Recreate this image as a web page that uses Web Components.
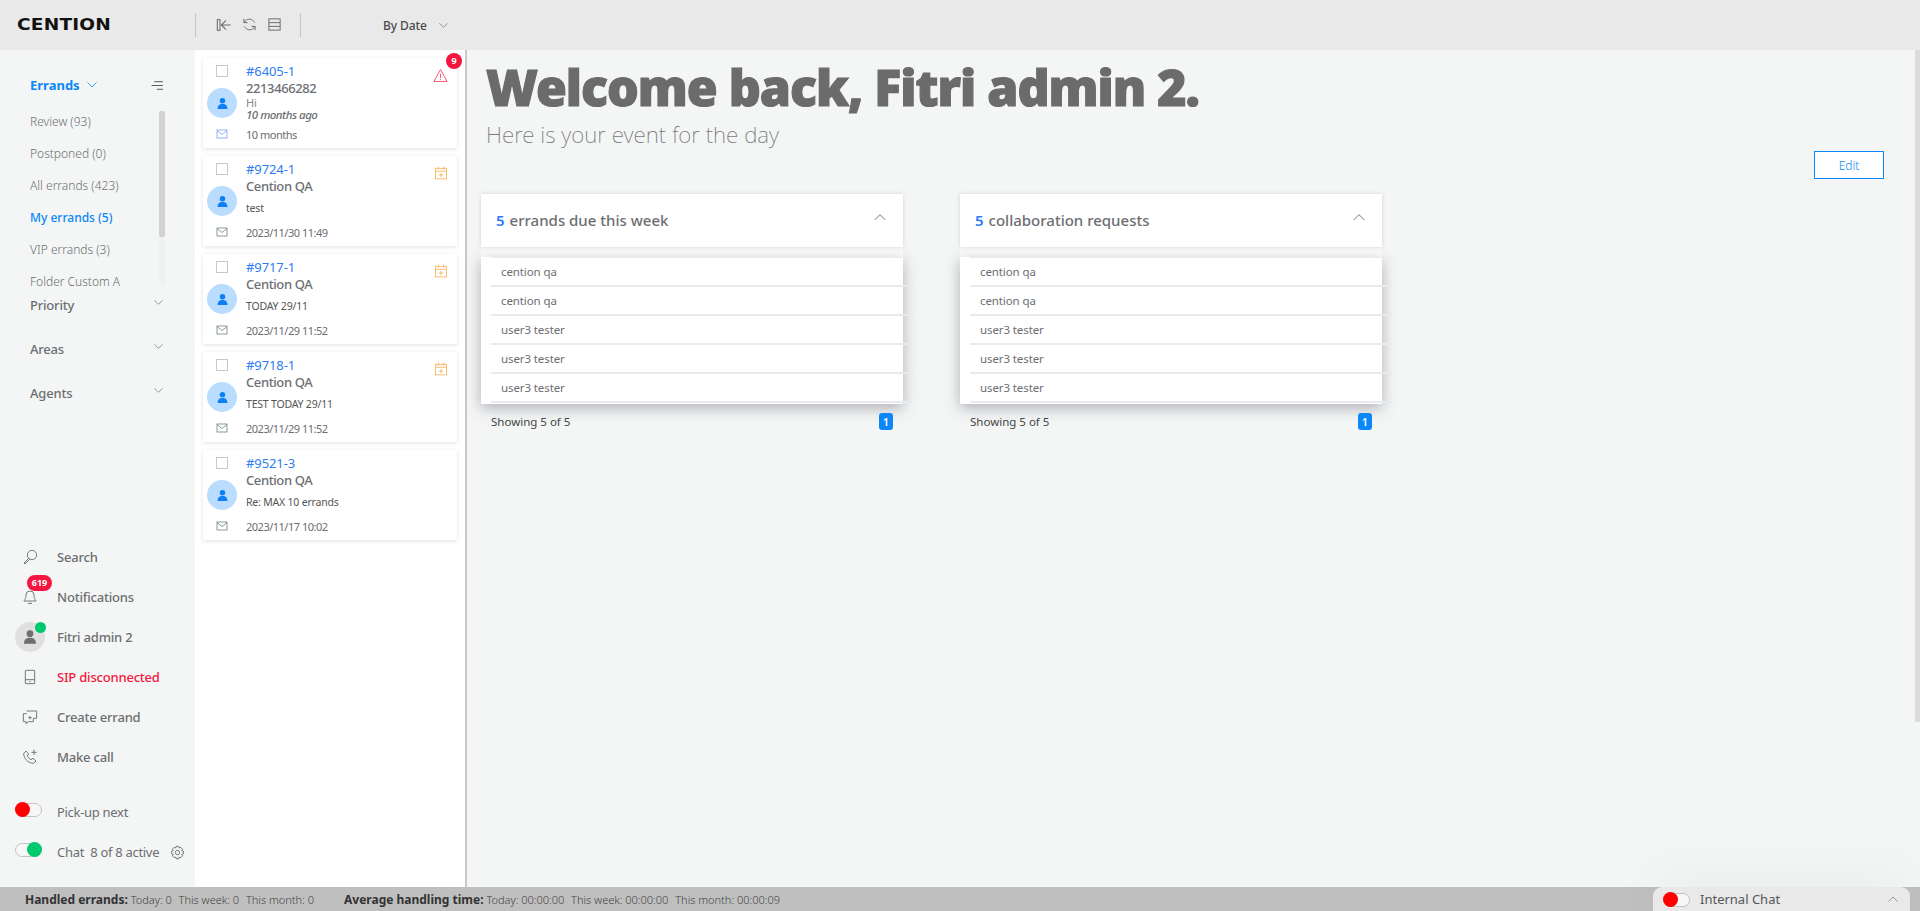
<!DOCTYPE html>
<html>
<head>
<meta charset="utf-8">
<title>Cention</title>
<style>
    html, body { margin: 0; height: 100%; overflow: hidden; }
    body { font-family: "Noto Sans", "Open Sans", sans-serif; color: #6d6e71; }
</style>
</head>
<body>
<app-shell>
    <top-bar slot="top"></top-bar>
    <side-nav slot="side">
        <nav-item icon="search">Search</nav-item>
        <nav-item icon="bell" badge="619">Notifications</nav-item>
        <nav-item icon="avatar">Fitri admin 2</nav-item>
        <nav-item icon="device" tone="alert">SIP disconnected</nav-item>
        <nav-item icon="chatplus">Create errand</nav-item>
        <nav-item icon="callplus">Make call</nav-item>
    </side-nav>
    <errand-list slot="list">
        <errand-card num="#6405-1" who="2213466282" subject="Hi" ago="10 months ago" date="10 months" flag="warn" count="9" kind="light"></errand-card>
        <errand-card num="#9724-1" who="Cention QA" subject="test" date="2023/11/30 11:49"></errand-card>
        <errand-card num="#9717-1" who="Cention QA" subject="TODAY 29/11" date="2023/11/29 11:52"></errand-card>
        <errand-card num="#9718-1" who="Cention QA" subject="TEST TODAY 29/11" date="2023/11/29 11:52"></errand-card>
        <errand-card num="#9521-3" who="Cention QA" subject="Re: MAX 10 errands" date="2023/11/17 10:02" flag="none"></errand-card>
    </errand-list>
    <welcome-board slot="main">
        <dash-widget count="5" label="errands due this week" names="cention qa,cention qa,user3 tester,user3 tester,user3 tester"></dash-widget>
        <dash-widget count="5" label="collaboration requests" names="cention qa,cention qa,user3 tester,user3 tester,user3 tester"></dash-widget>
    </welcome-board>
    <status-bar slot="bottom"></status-bar>
</app-shell>

<script>
// all the line icons live here, name -> svg body (24 box unless noted)
const ICONS = {
    collapse: '<rect x="2" y="4" width="4" height="16"/><path d="M22 12H9M15 5l-7 7 7 7"/>',
    refresh: '<path d="M20 9A9 9 0 0 0 5 6.500L3.500 9M4 15a9 9 0 0 0 15 2.500L20.500 15"/><path d="M3 3v6h6M21 21v-6h-6"/>',
    rows: '<rect x="3" y="3" width="18" height="18"/><path d="M3 9h18M3 15h18"/>',
    down: '<path d="M3 7l9 9 9-9"/>',
    up: '<path d="M3 17l9-9 9 9"/>',
    filter: '<path d="M6 5h16M1 12h21M11 19h11"/>',
    search: '<circle cx="15" cy="9" r="7"/><path d="M10 14l-7 7 1.500 1.500 7-7"/>',
    bell: '<path d="M12 3a6 6 0 0 0-6 6c0 6-3 8-3 9h18c0-1-3-3-3-9a6 6 0 0 0-6-6zM9 21.500h6"/>',
    device: '<rect x="5" y="2" width="14" height="20" rx="1"/><path d="M5 16h14M11 19h2"/>',
    chatplus: '<path d="M7 7H2v12h4v3l4-3h7v-5"/><path d="M7 3h15v11h-5M9.500 13h5M12 10.500v5"/>',
    callplus: '<path d="M6 3L2.500 6.500c0 8 7 15 15 15L21 18l-4.500-4-3 2c-2-1-4-3-5.500-5.500l2-3z"/><path d="M18 1v8M14 5h8"/>',
    gear: '<circle cx="12" cy="12" r="3.500"/><path d="M10 2h4l.7 2.800 2.600-1 2.800 2.800-1.300 2.500 2.700.9v4l-2.700.9 1.300 2.500-2.800 2.800-2.600-1L14 22h-4l-.7-2.800-2.600 1-2.800-2.800 1.300-2.500L2.500 14v-4l2.700-.9-1.300-2.500 2.800-2.800 2.600 1z"/>',
    mail: '<rect x="2" y="4" width="20" height="16"/><path d="M2 5l10 8 10-8"/>',
    warn: '<path d="M12 2.500L1.500 21.500h21z"/><path d="M12 9v7M12 17.500v1.500"/>',
    calendar: '<rect x="2.500" y="4" width="19" height="18"/><path d="M2.500 9h19M7.500 1v5M16.500 1v5M12 12v7M8.500 15.500h7"/>'
}

class AppIcon extends HTMLElement {
    connectedCallback() {
        const size = this.getAttribute('size') || 14
        const stroke = this.getAttribute('stroke') || 1.6
        this.attachShadow({mode: 'open'})
        this.shadowRoot.innerHTML = `
        <style>
            :host { display: inline-flex; width: ${size}px; height: ${size}px; flex: none; }
            svg { width: 100%; height: 100%; fill: none; stroke: currentColor; stroke-width: ${stroke}; }
        </style>
        <svg viewBox="0 0 24 24">${ICONS[this.getAttribute('name')]}</svg>
        `
    }
}
customElements.define('app-icon', AppIcon)

class ToggleSwitch extends HTMLElement {
    connectedCallback() {
        const on = this.hasAttribute('on')
        this.attachShadow({mode: 'open'})
        this.shadowRoot.innerHTML = `
        <style>
            :host { display: block; width: 27px; height: 15px; position: relative; flex: none; }
            .track { position: absolute; left: 0; right: 0; top: 1px; height: 12px; border: 1px solid #c4c4c4; border-radius: 8px; background: #f7f7f7; }
            .knob { position: absolute; top: 0; ${on ? 'right: 0; background: #00c96f;' : 'left: 0; background: #ff0000;'} width: 15px; height: 15px; border-radius: 50%; }
        </style>
        <div class="track"></div><div class="knob"></div>
        `
    }
}
customElements.define('toggle-switch', ToggleSwitch)

class AppShell extends HTMLElement {
    constructor() {
        super()
        this.attachShadow({mode: 'open'})
        this.shadowRoot.innerHTML = `
        <style>
            :host { display: flex; flex-direction: column; height: 911px; overflow: hidden; }
            .middle { flex: 1; display: flex; min-height: 0; }
        </style>
        <slot name="top"></slot>
        <div class="middle">
            <slot name="side"></slot>
            <slot name="list"></slot>
            <slot name="main"></slot>
        </div>
        <slot name="bottom"></slot>
        `
    }
}
customElements.define('app-shell', AppShell)

class TopBar extends HTMLElement {
    constructor() {
        super()
        this.attachShadow({mode: 'open'})
        this.shadowRoot.innerHTML = `
        <style>
            :host { display: flex; align-items: center; height: 50px; background: #e9e9e9; flex: none; color: #6d6e71; }
            .logo { width: 195px; box-sizing: border-box; padding: 0 0 0 17px; font: 700 18px/50px "DejaVu Sans", sans-serif; color: #111; letter-spacing: .2px; }
            .logo span { display: inline-block; transform: scaleX(1.03) scaleY(.88); transform-origin: left center; }
            .sep { width: 1px; height: 24px; background: #c4c4c4; flex: none; }
            .tools { width: 104px; box-sizing: border-box; padding-left: 20px; display: flex; gap: 10px; align-items: center; margin-bottom: 1px; }
            .sort { margin-left: 82px; display: flex; align-items: center; gap: 11px; font-size: 12px; letter-spacing: -.1px; color: #4a4b4f; font-weight: 500; }
            .sort app-icon { color: #77787a; }
        </style>
        <div class="logo"><span>CENTION</span></div>
        <div class="sep"></div>
        <div class="tools">
            <app-icon name="collapse" size="16" stroke="1.600"></app-icon>
            <app-icon name="refresh" size="15" stroke="1.600"></app-icon>
            <app-icon name="rows" size="15" stroke="1.600"></app-icon>
        </div>
        <div class="sep"></div>
        <div class="sort">By Date <app-icon name="down" size="11" stroke="1.600"></app-icon></div>
        `
    }
}
customElements.define('top-bar', TopBar)

class NavItem extends HTMLElement {
    connectedCallback() {
        const icon = this.getAttribute('icon')
        const badge = this.getAttribute('badge')
        this.attachShadow({mode: 'open'})
        const glyph = icon === 'avatar'
            ? `<div class="avatar"><svg viewBox="0 0 24 24" width="16" height="16"><circle cx="12" cy="7" r="5" fill="#6d6e71"/><path d="M3 22c0-7 4-9 9-9s9 2 9 9z" fill="#6d6e71"/></svg><i class="dot"></i></div>`
            : `<app-icon name="${icon}" size="16" stroke="1.400"></app-icon>`
        this.shadowRoot.innerHTML = `
        <style>
            :host { display: flex; align-items: center; height: 40px; font-size: 13px; letter-spacing: -.2px; font-weight: 500; color: ${this.getAttribute('tone') === 'alert' ? '#f5163f' : '#6d6e71'}; }
            .ic { width: 57px; display: flex; justify-content: center; padding-left: 3px; box-sizing: border-box; position: relative; color: #6d6e71; }
            .avatar { width: 30px; height: 30px; border-radius: 50%; background: #e0e0e0; display: flex; align-items: center; justify-content: center; position: relative; }
            .dot { position: absolute; width: 11px; height: 11px; border-radius: 50%; background: #00c96f; right: -1px; top: 0; }
            .badge { position: absolute; left: 27px; top: -14px; background: #f5163f; color: #fff; font: 700 9px/16px "Noto Sans", sans-serif; letter-spacing: 0; padding: 0 4px; border-radius: 8px; min-width: 17px; text-align: center; }
        </style>
        <div class="ic">${glyph}${badge ? `<span class="badge">${badge}</span>` : ''}</div>
        <div><slot></slot></div>
        `
    }
}
customElements.define('nav-item', NavItem)

class SideNav extends HTMLElement {
    constructor() {
        super()
        this.attachShadow({mode: 'open'})
        const folders = ['Review (93)', 'Postponed (0)', 'All errands (423)', 'My errands (5)', 'VIP errands (3)', 'Folder Custom A']
        this.shadowRoot.innerHTML = `
        <style>
            :host { display: flex; flex-direction: column; width: 195px; flex: none; background: #f4f6f6; box-sizing: border-box; }
            .head { display: flex; align-items: center; height: 36px; margin-top: 17px; padding-left: 30px; padding-right: 31px; color: #0c87f7; font-size: 13px; font-weight: 700; }
            .head b { font-weight: 700; margin-right: 6px; }
            .head .f { margin-left: auto; color: #55565a; }
            .folders { position: relative; height: 184px; overflow: hidden; margin-top: 3px; padding-left: 30px; font-size: 12px; font-weight: 300; }
            .item { height: 32px; line-height: 32px; white-space: nowrap; }
            .item.on { color: #0c87f7; font-weight: 500; }
            .track { position: absolute; left: 159px; top: 5px; width: 6px; height: 175px; background: #f0f2f2; }
            .thumb { position: absolute; left: 159px; top: 5px; width: 6px; height: 126px; background: #d2d2d2; border-radius: 2px; }
            .group { display: flex; align-items: center; height: 44px; padding: 0 31px 0 30px; font-size: 13px; letter-spacing: -.2px; font-weight: 500; }
            .group app-icon { margin-left: auto; margin-top: -5px; }
            .fold-groups { margin-top: -7px; }
            .grow { flex: 1; }
            .tog { display: flex; align-items: center; height: 40px; font-size: 13px; letter-spacing: -.3px; color: #6d6e71; }
            .tog toggle-switch { margin: -5px 15px 0 15px; }
            .tog app-icon { margin-left: 11px; }
            .toggles { margin-top: 15px; padding-bottom: 15px; }
        </style>
        <div class="head"><b>Errands</b><app-icon name="down" size="12" stroke="1.600"></app-icon><app-icon class="f" name="filter" size="13" stroke="1.800"></app-icon></div>
        <div class="folders">
            ${folders.map(f => `<div class="item ${f.startsWith('My') ? 'on' : ''}">${f}</div>`).join('')}
            <div class="track"></div><div class="thumb"></div>
        </div>
        <div class="fold-groups">
            <div class="group">Priority <app-icon name="down" size="11" stroke="1.500"></app-icon></div>
            <div class="group">Areas <app-icon name="down" size="11" stroke="1.500"></app-icon></div>
            <div class="group">Agents <app-icon name="down" size="11" stroke="1.500"></app-icon></div>
        </div>
        <div class="grow"></div>
        <slot></slot>
        <div class="toggles">
            <div class="tog"><toggle-switch></toggle-switch>Pick-up next</div>
            <div class="tog"><toggle-switch on></toggle-switch>Chat&nbsp; 8 of 8 active<app-icon name="gear" size="15" stroke="1.500"></app-icon></div>
        </div>
        `
    }
}
customElements.define('side-nav', SideNav)

class ErrandList extends HTMLElement {
    constructor() {
        super()
        this.attachShadow({mode: 'open'})
        this.shadowRoot.innerHTML = `
        <style>
            :host { display: flex; flex-direction: column; gap: 8px; width: 272px; flex: none; box-sizing: border-box; background: #fff; padding: 8px 0 0 8px; border-right: 2px solid #c9c9c9; }
        </style>
        <slot></slot>
        `
    }
}
customElements.define('errand-list', ErrandList)

class ErrandCard extends HTMLElement {
    connectedCallback() {
        const flag = this.getAttribute('flag') || 'calendar'
        const count = this.getAttribute('count')
        const ago = this.getAttribute('ago')
        const light = this.getAttribute('kind') === 'light'
        this.attachShadow({mode: 'open'})
        let flagIcon = ''
        if(flag === 'warn') {
            flagIcon = '<app-icon class="flag" style="color:#f5415f" name="warn" size="15" stroke="1.400"></app-icon>'
        } else if(flag === 'calendar') {
            flagIcon = '<app-icon class="flag" style="color:#fbb35a" name="calendar" size="14" stroke="1.500"></app-icon>'
        }
        this.shadowRoot.innerHTML = `
        <style>
            :host { display: flex; position: relative; width: 254px; height: 90px; flex: none; background: #fff; box-shadow: 0 1px 4px rgba(0,0,0,.12); font-size: 12px; color: #6d6e71; }
            .left { width: 38px; display: flex; flex-direction: column; align-items: center; margin-right: 5px; box-sizing: border-box; }
            .check { width: 10px; height: 10px; border: 1px solid #c8c8c8; margin-top: 7px; }
            .avatar { width: 30px; height: 30px; margin-top: 11px; border-radius: 50%; background: #b9dcff; display: flex; align-items: center; justify-content: center; }
            .mail { margin-top: 10px; color: ${light ? '#7f9df5' : '#6d8082'}; }
            .text { flex: 1; padding-top: 5px; min-width: 0; }
            .num { font-size: 13px; line-height: 16px; letter-spacing: -.1px; color: #2e7cf2; }
            .who { font-size: 13px; line-height: 18px; letter-spacing: -.4px; font-weight: 500; }
            .mid { height: 31px; display: flex; flex-direction: column; }
            .sub { font-size: 10.500px; line-height: 13px; letter-spacing: -.2px; color: #555; margin-top: 7px; }
            .sub.light { color: #888; margin-top: 0; font-size: 11px; line-height: 11px; }
            .ago { font-size: 11.500px; line-height: 14px; letter-spacing: -.5px; font-style: italic; font-weight: 500; }
            .date { font-size: 11px; line-height: 14px; letter-spacing: -.5px; }
            .flag { position: absolute; right: 9px; top: 10px; }
            .badge { position: absolute; right: -5px; top: -5px; width: 16px; height: 16px; border-radius: 50%; background: #f5163f; color: #fff; font: 700 9px/16px "Noto Sans", sans-serif; text-align: center; }
        </style>
        <div class="left">
            <div class="check"></div>
            <div class="avatar"><svg viewBox="0 0 24 24" width="13" height="13"><circle cx="12" cy="7" r="5" fill="#0c7ff2"/><path d="M3 22c0-7 4-9 9-9s9 2 9 9z" fill="#0c7ff2"/></svg></div>
            <app-icon class="mail" name="mail" size="12" stroke="1.600"></app-icon>
        </div>
        <div class="text">
            <div class="num">${this.getAttribute('num')}</div>
            <div class="who">${this.getAttribute('who')}</div>
            <div class="mid">
                <div class="sub ${ago ? 'light' : ''}">${this.getAttribute('subject')}</div>
                ${ago ? `<div class="ago">${ago}</div>` : ''}
            </div>
            <div class="date">${this.getAttribute('date')}</div>
        </div>
        ${flagIcon}
        ${count ? `<div class="badge">${count}</div>` : ''}
        `
    }
}
customElements.define('errand-card', ErrandCard)

class DashWidget extends HTMLElement {
    connectedCallback() {
        const names = this.getAttribute('names').split(',')
        this.attachShadow({mode: 'open'})
        this.shadowRoot.innerHTML = `
        <style>
            :host { display: block; width: 422px; flex: none; color: #6d6e71; }
            .head { height: 53px; background: #fff; display: flex; align-items: center; padding: 0 16px 2px 15px; box-sizing: border-box; font-size: 15px; font-weight: 500; box-shadow: 0 0 4px rgba(0,0,0,.14); position: relative; }
            .head b { color: #2e7cf2; font-weight: 600; margin-right: 5px; }
            .head app-icon { margin-left: auto; margin-top: -5px; color: #4a4b4f; }
            .fade { height: 10px; background: linear-gradient(#f8f9f9, #fff); }
            .body { background: #fff; box-shadow: 0 4px 14px rgba(40,40,60,.35); padding-left: 10px; height: 147px; }
            .row { width: 412px; height: 27px; border-top: 2px solid #e9eaeb; font-size: 11.500px; letter-spacing: -.1px; line-height: 27px; padding-left: 10px; }
            .row:first-child { height: 27px; border-top-width: 1px; }
            .end { width: 422px; height: 2px; background: #e9eaeb; }
            .foot { display: flex; align-items: center; justify-content: space-between; padding: 9px 10px 0 10px; font-size: 11.500px; color: #444; }
            .page { width: 14px; height: 17px; background: #0c87f7; border-radius: 3px; color: #fff; font-size: 11px; font-weight: 600; text-align: center; line-height: 17px; }
        </style>
        <div class="head"><b>${this.getAttribute('count')}</b>${this.getAttribute('label')}<app-icon name="up" size="14" stroke="1.300"></app-icon></div>
        <div class="fade"></div>
        <div class="body">
            ${names.map(n => `<div class="row">${n}</div>`).join('')}
            <div class="end"></div>
        </div>
        <div class="foot"><span>Showing ${names.length} of ${names.length}</span><span class="page">1</span></div>
        `
    }
}
customElements.define('dash-widget', DashWidget)

class WelcomeBoard extends HTMLElement {
    constructor() {
        super()
        this.attachShadow({mode: 'open'})
        this.shadowRoot.innerHTML = `
        <style>
            :host { display: flex; flex: 1; min-width: 0; background: #f4f6f6; color: #6b6b6b; }
            .page { flex: 1; min-width: 0; padding-left: 14px; }
            h1 { margin: 0 0 0 5px; padding-top: 5px; font-size: 50px; line-height: 64px; letter-spacing: -1px; font-weight: 900; -webkit-text-stroke: 1.200px currentColor; white-space: nowrap; }
            .lead { margin: 2px 0 0 5px; font-size: 22.400px; line-height: 28px; font-weight: 200; color: #77787a; }
            .tools { display: flex; justify-content: flex-end; padding-right: 31px; margin-top: 2px; }
            button { width: 70px; height: 28px; background: #fff; border: 1px solid #0c87f7; color: #0c87f7; font: 300 12px "Noto Sans", sans-serif; padding: 0; }
            .widgets { display: flex; gap: 57px; margin-top: 15px; }
            .bar { width: 5px; flex: none; align-self: flex-start; height: 672px; background: #dcdcdc; }
        </style>
        <div class="page">
            <h1>Welcome back, Fitri admin 2.</h1>
            <div class="lead">Here is your event for the day</div>
            <div class="tools"><button>Edit</button></div>
            <div class="widgets"><slot></slot></div>
        </div>
        <div class="bar"></div>
        `
    }
}
customElements.define('welcome-board', WelcomeBoard)

class ChatDock extends HTMLElement {
    constructor() {
        super()
        this.attachShadow({mode: 'open'})
        this.shadowRoot.innerHTML = `
        <style>
            :host { display: flex; align-items: center; position: absolute; right: 10px; bottom: 0; width: 257px; height: 24px; box-sizing: border-box; padding: 0 11px 0 10px; background: #e9e9e9; border-radius: 9px 9px 0 0; box-shadow: 0 -8px 50px rgba(0,0,0,.06); font-size: 13px; font-weight: 400; color: #55565a; }
            span { margin-left: 10px; }
            app-icon { margin-left: auto; color: #77787a; }
        </style>
        <toggle-switch></toggle-switch><span>Internal Chat</span><app-icon name="up" size="12" stroke="1.500"></app-icon>
        `
    }
}
customElements.define('chat-dock', ChatDock)

class StatusBar extends HTMLElement {
    constructor() {
        super()
        this.attachShadow({mode: 'open'})
        this.shadowRoot.innerHTML = `
        <style>
            :host { display: flex; align-items: center; position: relative; height: 24px; flex: none; background: #bfbfbf; font-size: 11px; font-weight: 300; color: #444; padding-left: 25px; white-space: nowrap; }
            b { font-weight: 700; font-size: 12px; color: #333; }
            .block { width: 319px; }
            span { margin-left: 4px; }
        </style>
        <div class="block"><b>Handled errands:</b> Today: 0 <span>This week: 0</span> <span>This month: 0</span></div>
        <div><b>Average handling time:</b> Today: 00:00:00 <span>This week: 00:00:00</span> <span>This month: 00:00:09</span></div>
        <chat-dock></chat-dock>
        `
    }
}
customElements.define('status-bar', StatusBar)
</script>
</body>
</html>
